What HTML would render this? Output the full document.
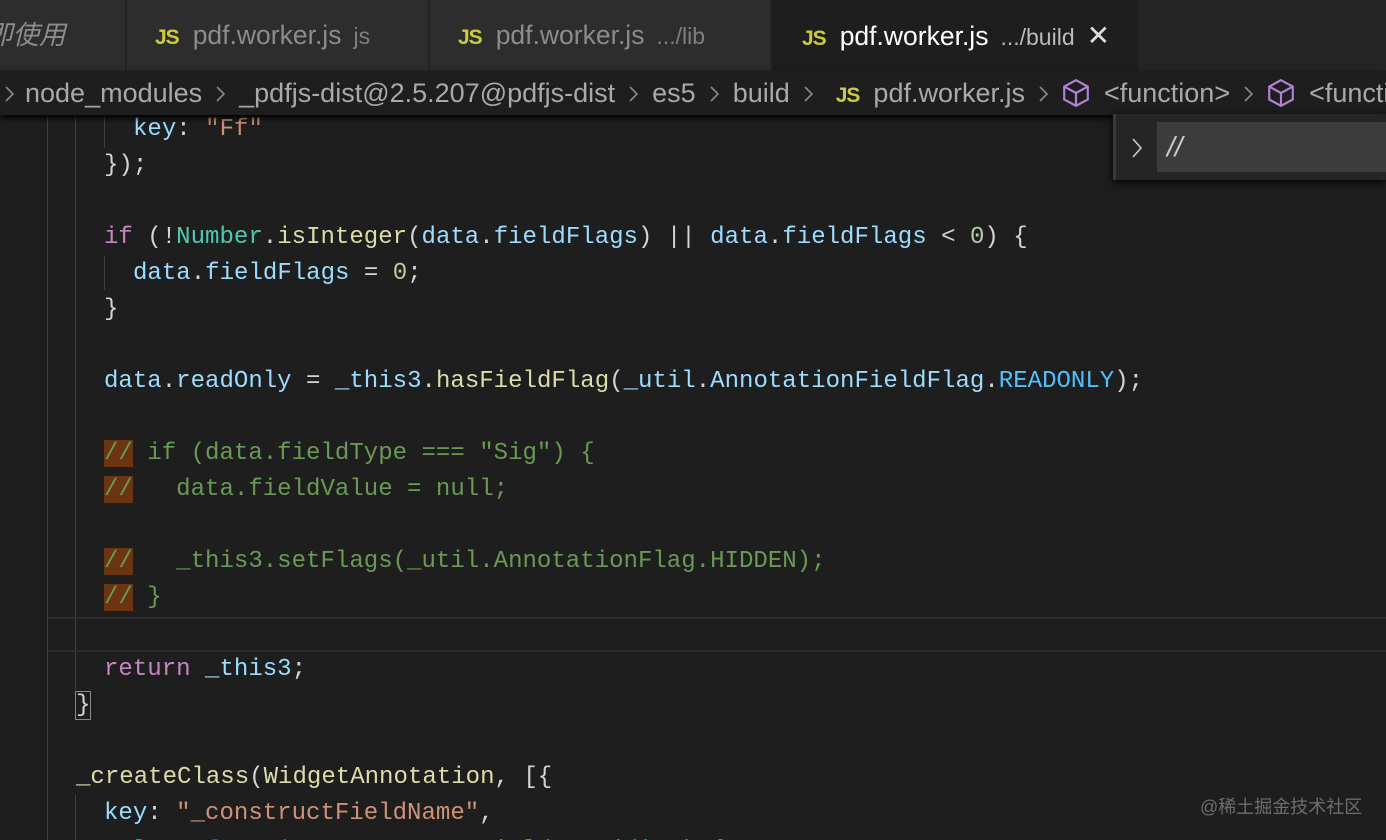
<!DOCTYPE html>
<html><head><meta charset="utf-8"><style>
*{margin:0;padding:0;box-sizing:border-box}
html,body{width:1386px;height:840px;overflow:hidden}
body{background:#1e1e1e;position:relative;font-family:"Liberation Sans","Noto Sans CJK SC",sans-serif}
.tabs{position:absolute;left:0;top:0;width:1386px;height:71px;background:#252526}
.tab{position:absolute;top:0;height:71px;background:#2d2d2d;color:#8c8c8c;font-size:26.5px;line-height:71px;white-space:nowrap;overflow:hidden}
.js{color:#cbcb41;font-weight:bold;font-size:21px;margin-right:14px;letter-spacing:-1px}
.dim{font-size:23px;color:#7f7f7f;margin-left:12px}
.bc{position:absolute;left:0;top:71px;width:1386px;height:44px;background:#1e1e1e;color:#a9a9a9;font-size:27px;line-height:44px;white-space:nowrap;box-shadow:0 3px 6px #000;z-index:2}
.sep{display:inline-block;width:12px;height:20px;margin:0 13px 0 12px;vertical-align:-2px}
.code{position:absolute;left:0;top:0;width:1386px;height:840px;font-family:"Liberation Mono","DejaVu Sans Mono",monospace;font-size:24.05px;color:#d4d4d4;overflow:hidden}
.l{position:absolute;white-space:pre;height:36px;line-height:36px}
.g{position:absolute;width:1px;background:#404040}
.k{color:#9cdcfe}.s1{color:#ce9178}.kw{color:#c586c0}.t{color:#4ec9b0}.f{color:#dcdcaa}.n{color:#b5cea8}.c{color:#6a9955}
.hl{background:#6b3512}
.find{position:absolute;left:1113px;top:114px;width:273px;height:66px;background:#252526;border-left:3px solid #3a3a3a;box-shadow:0 2px 8px #000;z-index:3}
.find .in{position:absolute;left:41px;top:8px;right:0;height:50px;background:#3c3c3c;color:#ccc;font-size:28px;line-height:50px;padding-left:10px;font-style:italic}
.wm{position:absolute;left:1200px;top:793px;color:#6d6d6d;font-size:18px;font-family:"Liberation Sans","Noto Sans CJK SC",sans-serif}
</style></head><body>
<div class="tabs">
 <div class="tab" style="left:0;width:125px;"><span style="position:absolute;left:-14px;font-style:italic">即使用</span></div>
 <div class="tab" style="left:127px;width:301px;padding-left:28px"><span class="js">JS</span>pdf.worker.js<span class="dim">js</span></div>
 <div class="tab" style="left:430px;width:340px;padding-left:28px"><span class="js">JS</span>pdf.worker.js<span class="dim">.../lib</span></div>
 <div class="tab" style="left:772px;width:366px;padding-left:30px;background:#1e1e1e;color:#fff"><span class="js">JS</span>pdf.worker.js<span class="dim" style="color:#bbb">.../build</span><span style="margin-left:12px;font-size:28px;color:#ddd">✕</span></div>
</div>
<svg width="0" height="0" style="position:absolute"><defs><symbol id="ch" viewBox="0 0 12 20"><path d="M3 3 L10 10 L3 17" fill="none" stroke="#8a8a8a" stroke-width="1.6"/></symbol><symbol id="cube" viewBox="0 0 26 28"><path d="M13 2 L24 8 L24 20 L13 26 L2 20 L2 8 Z M2 8 L13 14 L24 8 M13 14 L13 26" fill="none" stroke="#b180d7" stroke-width="2"/></symbol></defs></svg>
<div class="bc"><svg class="sep" style="margin-left:3px;margin-right:10px"><use href="#ch"/></svg>node_modules<svg class="sep"><use href="#ch"/></svg>_pdfjs-dist@2.5.207@pdfjs-dist<svg class="sep"><use href="#ch"/></svg>es5<svg class="sep"><use href="#ch"/></svg>build<svg class="sep" style="margin-right:22px"><use href="#ch"/></svg><span class="js" style="margin-right:14px">JS</span>pdf.worker.js<svg class="sep"><use href="#ch"/></svg><svg width="28" height="30" style="vertical-align:-6px;margin:0 14px 0 0"><use href="#cube"/></svg>&lt;function&gt;<svg class="sep"><use href="#ch"/></svg><svg width="28" height="30" style="vertical-align:-6px;margin:0 14px 0 0"><use href="#cube"/></svg>&lt;function&gt;</div>
<div class="find"><svg style="position:absolute;left:14px;top:22px" width="14" height="24"><path d="M3 3 L11 12 L3 21" fill="none" stroke="#ccc" stroke-width="1.6"/></svg><div class="in">//</div></div>
<div class="code">
 <div class="g" style="left:47px;top:114px;height:726px"></div>
 <div class="g" style="left:75px;top:114px;height:576px"></div>
 <div class="g" style="left:75px;top:795px;height:45px"></div>
 <div class="g" style="left:104px;top:114px;height:34px"></div>
 <div class="g" style="left:104px;top:256px;height:34px"></div>
 <div style="position:absolute;left:48px;top:617px;width:1338px;height:35px;border-top:2px solid #2c2c2c;border-bottom:2px solid #2c2c2c"></div>
 <div class="l" style="left:133px;top:112px"><span class="k">key</span>: <span class="s1">"Ff"</span></div>
 <div class="l" style="left:104px;top:148px">});</div>
 <div class="l" style="left:104px;top:220px"><span class="kw">if</span> (!<span class="t">Number</span>.<span class="f">isInteger</span>(<span class="k">data</span>.<span class="k">fieldFlags</span>) || <span class="k">data</span>.<span class="k">fieldFlags</span> &lt; <span class="n">0</span>) {</div>
 <div class="l" style="left:133px;top:256px"><span class="k">data</span>.<span class="k">fieldFlags</span> = <span class="n">0</span>;</div>
 <div class="l" style="left:104px;top:292px">}</div>
 <div class="l" style="left:104px;top:364px"><span class="k">data</span>.<span class="k">readOnly</span> = <span class="k">_this3</span>.<span class="f">hasFieldFlag</span>(<span class="k">_util</span>.<span class="k">AnnotationFieldFlag</span>.<span class="k" style="color:#4fc1ff">READONLY</span>);</div>
 <div class="l c" style="left:104px;top:436px"><span class="hl">//</span> if (data.fieldType === "Sig") {</div>
 <div class="l c" style="left:104px;top:472px"><span class="hl">//</span>   data.fieldValue = null;</div>
 <div class="l c" style="left:104px;top:544px"><span class="hl">//</span>   _this3.setFlags(_util.AnnotationFlag.HIDDEN);</div>
 <div class="l c" style="left:104px;top:580px"><span class="hl">//</span> }</div>
 <div class="l" style="left:104px;top:652px"><span class="kw">return</span> <span class="k">_this3</span>;</div>
 <div class="l" style="left:76px;top:688px"><span style="outline:1.5px solid #888;outline-offset:0">}</span></div>
 <div class="l" style="left:76px;top:760px"><span class="f">_createClass</span>(<span class="f">WidgetAnnotation</span>, [{</div>
 <div class="l" style="left:104px;top:796px"><span class="k">key</span>: <span class="s1">"_constructFieldName"</span>,</div>
 <div class="l" style="left:104px;top:834px"><span class="k">value</span>: <span class="kw" style="color:#569cd6">function</span> <span class="f">_constructFieldName</span>(<span class="k">dict</span>) {</div>
</div>
<div class="wm">@稀土掘金技术社区</div>
</body></html>
